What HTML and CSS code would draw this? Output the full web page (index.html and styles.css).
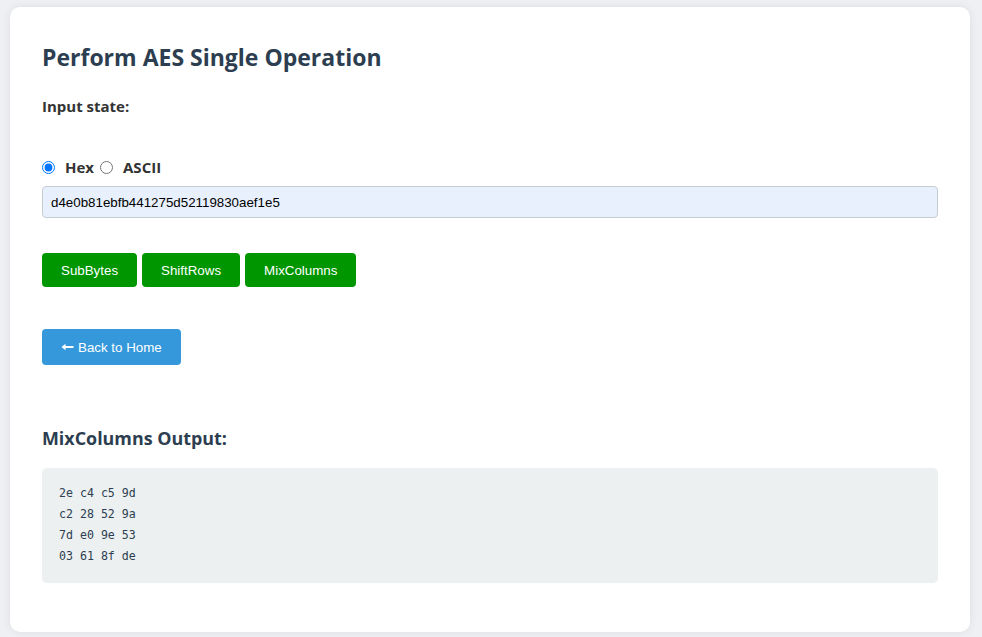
FILE: index.html
```html
<!DOCTYPE html>
<html>
<head>
<meta charset="utf-8">
<link rel="stylesheet" href="styles.css">
</head>
<body>
<div class="card">
  <h2 class="title">Perform AES Single Operation</h2>
  <div class="label">Input state:</div>
  <div class="radios">
    <input class="r1" type="radio" name="fmt" id="hex" checked><label for="hex">Hex</label><input class="r2" type="radio" name="fmt" id="ascii"><label for="ascii">ASCII</label>
  </div>
  <input class="state" type="text" value="d4e0b81ebfb441275d52119830aef1e5">
  <div class="ops">
    <button class="op">SubBytes</button>
    <button class="op">ShiftRows</button>
    <button class="op">MixColumns</button>
  </div>
  <a class="back" href="#"><svg class="arrow" width="13" height="8" viewBox="0 0 13 8"><path d="M0.5 4 L4.5 0.8 L4.5 3 L12.5 3 L12.5 5 L4.5 5 L4.5 7.2 Z" fill="#ffffff"/></svg>Back to Home</a>
  <h3 class="out-title">MixColumns Output:</h3>
  <pre class="out">2e c4 c5 9d
c2 28 52 9a
7d e0 9e 53
03 61 8f de</pre>
</div>
</body>
</html>
```
FILE: styles.css
```css
html, body {
  margin: 0;
  padding: 0;
}
body {
  background: #eef0f4;
  font-family: "Open Sans", "Noto Sans", sans-serif;
  color: #2c3e50;
  padding: 7px 0;
}
.card {
  width: 896px;
  margin: 0 0 0 10px;
  background: #ffffff;
  border-radius: 10px;
  box-shadow: 0 0 10px rgba(0, 0, 0, 0.08);
  padding: 34px 32px 49px 32px;
}
.title {
  margin: 0;
  font-size: 23px;
  line-height: 32px;
  font-weight: 700;
  color: #2c3e50;
}
.label {
  margin-top: 23px;
  font-size: 15px;
  font-weight: 700;
  color: #333333;
  line-height: 20px;
}
.radios {
  margin-top: 41px;
  display: flex;
  align-items: center;
  height: 20px;
  font-size: 15px;
  font-weight: 700;
  color: #333333;
}
.radios input {
  width: 13px;
  height: 13px;
}
.r1 {
  margin: 0 10px 0 0;
}
.r2 {
  margin: 0 10px 0 6px;
}
.state {
  display: block;
  box-sizing: border-box;
  width: 100%;
  height: 32px;
  margin-top: 9px;
  padding: 0 8px;
  font-family: "Liberation Sans", Arial, sans-serif;
  font-size: 13.333px;
  color: #000;
  background: #e8f0fe;
  border: 1px solid #c7ccd1;
  border-radius: 4px;
}
.ops {
  margin-top: 35px;
  display: flex;
  gap: 5px;
}
.op {
  height: 34px;
  padding: 0 19px;
  border: none;
  border-radius: 4px;
  background: #009600;
  color: #ffffff;
  font-family: "Liberation Sans", Arial, sans-serif;
  font-size: 13.333px;
}
.op:nth-child(2) {
  padding: 0 19px;
}
.back {
  display: inline-flex;
  align-items: center;
  height: 36px;
  margin-top: 42px;
  padding: 0 19px;
  box-sizing: border-box;
  background: #3498db;
  color: #ffffff;
  border-radius: 4px;
  text-decoration: none;
  font-family: "Liberation Sans", Arial, sans-serif;
  font-size: 13.333px;
}
.arrow {
  margin-right: 4px;
}
.out-title {
  margin: 61px 0 0 0;
  font-size: 17.9px;
  line-height: 24px;
  font-weight: 700;
  color: #2c3e50;
}
.out {
  margin: 18px 0 0 0;
  padding: 15px 17px 16px 17px;
  background: #ecf0f1;
  border-radius: 5px;
  font-family: "DejaVu Sans Mono", monospace;
  font-size: 11.6px;
  line-height: 21px;
  color: #2c3e50;
}
```
